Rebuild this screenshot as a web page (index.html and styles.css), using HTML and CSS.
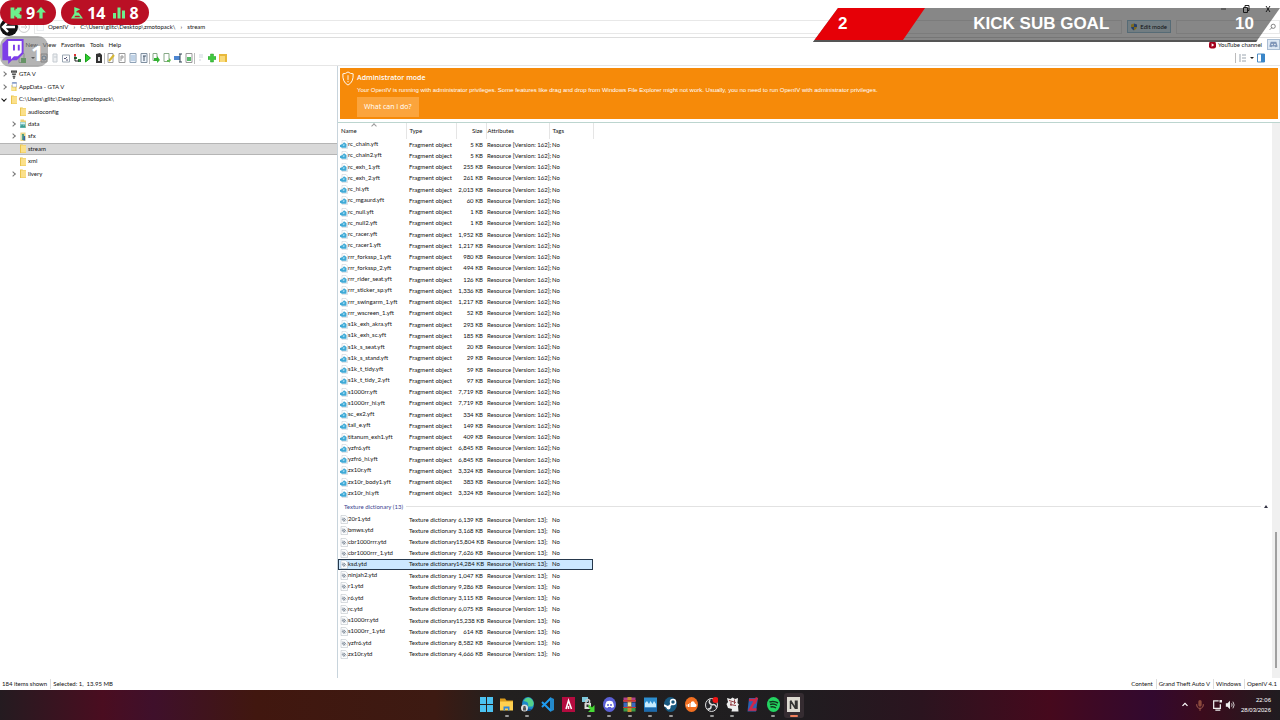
FILE: index.html
```html
<!DOCTYPE html>
<html lang="en">
<head>
    <meta charset="UTF-8">
    <meta name="viewport" content="width=device-width, initial-scale=1.0">
    <title>OpenIV</title>
    <link rel="stylesheet" href="styles.css">
</head>
<body>
    <svg class="symbols" aria-hidden="true">
        <symbol id="i-folder" viewBox="0 0 12 20" preserveAspectRatio="none"><path fill="#e9c34c" d="M0 1h5l1 1h6v18H0z"/><path fill="#fbe08a" d="M2 3h10v16H2z"/></symbol>
        <symbol id="i-folder-pic" viewBox="0 0 14 18" preserveAspectRatio="none"><path fill="#e9cf74" d="M1 1h8l1 2h4v15H1z"/><path fill="#7fc3c4" d="M0 6h13v12H0z"/><path fill="#d5f0ee" d="M1 7h11v3H1z"/><path fill="#3d9c8f" d="M1 15l4-4 3 3 3-2 2 5H1z"/></symbol>
        <symbol id="i-folder-sfx" viewBox="0 0 14 18" preserveAspectRatio="none"><path fill="#ecd68a" d="M1 1h12v17H1z"/><path fill="#2f8f7d" d="M5 4h4v12H5z"/><path fill="#3a62a8" d="M9 8h3v9H8z"/><path fill="#c8e4e0" d="M3 6h2v9H3z"/></symbol>
        <symbol id="i-app" viewBox="0 0 14 18" preserveAspectRatio="none"><path fill="#f0d25c" d="M1 6h12v12H1z"/><path fill="#fff" stroke="#8793ad" d="M3 1h10v9H3z"/><path fill="#4f73b8" d="M3 1h10v2H3z"/><path fill="#fbe79a" d="M1 11h9v6H1z"/></symbol>
        <symbol id="i-gta" viewBox="0 0 18 16" preserveAspectRatio="none"><path fill="#444" d="M0 1h18v4H0zM3 6h12v3H3zM5 10h8v3H5zM7 13h4v3H7z"/><path stroke="#999" d="M4 0v9M9 0v15M14 0v9"/></symbol>
        <symbol id="i-yft" viewBox="0 0 16 20" preserveAspectRatio="none"><path fill="#fff" stroke="#b9c2cc" d="M4 1h8l3 4v14H4z"/><path fill="#3fa9d6" d="M0 11l5-2 3-4 5 4v8H4l-4-2z"/><path fill="#9edcf3" d="M5 11l3-2 2 2-3 3z"/></symbol>
        <symbol id="i-ytd" viewBox="0 0 16 20" preserveAspectRatio="none"><path fill="#fbfcfd" stroke="#a9b2bc" d="M2 1h9l4 4v14H2z"/><path fill="none" stroke="#7a8796" stroke-width="2" d="M5 6l5 8M8 6l4 6M4 9l4 6"/></symbol>
        <symbol id="i-page" viewBox="0 0 16 20" preserveAspectRatio="none"><path fill="#f7fafc" stroke="#8f9caa" d="M2 1h9l4 4v14H2z"/></symbol>
    </svg>

    <header class="titlebar">
        <button class="back" aria-label="Back"><svg viewBox="0 0 18 18"><circle cx="9" cy="9" r="9" fill="#111"/><path d="M15 9H4M8 4L3 9l5 5" fill="none" stroke="#fff" stroke-width="2.4"/></svg></button>
        <button class="forward" aria-label="Forward"><svg viewBox="0 0 12 12"><circle cx="6" cy="6" r="5.4" fill="#fff" stroke="#ccc"/><path d="M3 6h6M7 4l2 2-2 2" fill="none" stroke="#ccc"/></svg></button>
        <nav class="path">
            <svg class="mini"><use href="#i-page"/></svg>
            <a href="#">OpenIV</a><i>›</i>
            <a href="#">C:\Users\glitc\Desktop\zmotopack\</a><i>›</i>
            <a href="#">stream</a>
        </nav>
        <button class="edit-mode">
            <svg viewBox="0 0 14 16"><path fill="#3c6fc4" d="M7 0l7 2v6H7z"/><path fill="#e8c531" d="M7 0L0 2v6h7zM7 8h7q-1 6-7 8z"/><path fill="#3c6fc4" d="M0 8h7v8Q1 14 0 8z"/></svg>
            Edit mode
        </button>
        <div class="search">
            <input type="text" aria-label="Search">
            <svg viewBox="0 0 10 10"><circle cx="6" cy="4" r="3" fill="none" stroke="#555"/><path d="M4 6L1 9" stroke="#555"/></svg>
        </div>
        <div class="window-buttons">
            <button aria-label="Minimize"><svg viewBox="0 0 8 8"><path d="M1 4h5" stroke="#555"/></svg></button>
            <button aria-label="Restore"><svg viewBox="0 0 8 8"><path d="M1.5 2.500h4v5h-4zM3 2.500v-2h4v5H5.500" fill="none" stroke="#222"/></svg></button>
            <button aria-label="Close"><svg viewBox="0 0 8 8"><path d="M2 1l4 6M6 1L2 7" stroke="#222"/></svg></button>
        </div>
    </header>

    <nav class="menubar">
        <button>File</button>
        <button>New</button>
        <button>View</button>
        <button>Favorites</button>
        <button>Tools</button>
        <button>Help</button>
        <a class="youtube" href="#"><svg viewBox="0 0 16 16"><rect width="16" height="16" rx="5" fill="#a4001c"/><path d="M6 4l6 4-6 4z" fill="#fff"/></svg>YouTube channel</a>
        <button class="discord" aria-label="Discord"><svg viewBox="0 0 12 10"><path fill="#7f96b8" d="M2 1h8l2 7-3 1-1-1H4L3 9 0 8z"/><circle cx="4" cy="5" r="1" fill="#fff"/><circle cx="8" cy="5" r="1" fill="#fff"/></svg></button>
    </nav>

    <div class="toolbar">
        <button aria-label="Open"><svg viewBox="0 0 8 10"><path fill="#fff" stroke="#8a8" d="M1 .5h5v9H1z"/><path fill="#3fae3f" d="M3 5h5v5H3z"/></svg></button>
        <button aria-label="More"><svg viewBox="0 0 8 10"><path d="M2 4h4L4 6z" fill="#222"/></svg></button>
        <button aria-label="Refresh"><svg viewBox="0 0 8 10"><path fill="#eee" stroke="#888" d="M1 1h6v8H1z"/><circle cx="4" cy="5" r="2" fill="none" stroke="#47739c"/></svg></button>
        <button aria-label="Undo"><svg viewBox="0 0 8 10"><path fill="#eef0f2" stroke="#c5cbd1" d="M2 1h4v8H2zM3 4h3"/></svg></button>
        <button aria-label="Select"><svg viewBox="0 0 8 10"><path fill="#fff" stroke="#9aa6b2" d="M.5 2h7v7h-7z"/><path d="M2 5l1 1 2-2M4 7h2" fill="none" stroke="#557"/></svg></button>
        <button aria-label="Tree"><svg viewBox="0 0 8 10"><path fill="#d33" d="M1 1h2v2H1z"/><path fill="#2b8a3a" d="M1 4h3v2H1zM5 6h3v3H5z"/><path d="M2 3v5h4" fill="none" stroke="#222"/></svg></button>
        <button aria-label="Run"><svg viewBox="0 0 8 10"><path fill="#2fd02f" stroke="#1b9c1b" d="M1.500 1l5 4-5 4z"/></svg></button>
        <button aria-label="Package"><svg viewBox="0 0 8 10"><path fill="#333" d="M1 1l4-1 2 2v8H1z"/><path fill="#ddd" d="M3 4h2v4H3z"/></svg></button>
        <span class="sep"></span>
        <button aria-label="Edit"><svg viewBox="0 0 8 10"><path fill="#fff" stroke="#999" d="M1 .5h5v9H1z"/><path d="M2 8l5-6" stroke="#d8b832" stroke-width="2"/></svg></button>
        <button aria-label="Properties"><svg viewBox="0 0 8 10"><path fill="#fff" stroke="#999" d="M1 .5h6v9H1z"/><path d="M3 8V3h2v2H3" fill="none" stroke="#999"/></svg></button>
        <button aria-label="View text"><svg viewBox="0 0 8 10"><path fill="#eef4fb" stroke="#8fa2b6" d="M1 .5h6v9H1z"/><path d="M2 3h4M2 5h4M2 7h4" stroke="#8fb0d2"/></svg></button>
        <button aria-label="View hex"><svg viewBox="0 0 8 10"><path fill="#eef4fb" stroke="#8090a0" d="M1 .5h6v9H1z"/><path d="M3 3h3M4 3v5" stroke="#456"/></svg></button>
        <span class="sep"></span>
        <button aria-label="Import"><svg viewBox="0 0 8 10"><path fill="#fff" stroke="#8a8" d="M1 .5h4v7H1z"/><path fill="#35b335" d="M2 5h3V3l3 4-3 3V8H2z"/></svg></button>
        <button aria-label="Export"><svg viewBox="0 0 8 10"><path fill="#fff" stroke="#8a8" d="M1 .5h5v8H1z"/><path fill="#62ba57" d="M4 7h2V5l2 2-2 3V9H4z"/></svg></button>
        <button aria-label="Rename"><svg viewBox="0 0 8 10"><path fill="#4d86d2" d="M0 3h6v4H0z"/><path d="M6 1v8M5 1h3M5 9h3" stroke="#345"/></svg></button>
        <button aria-label="Replace"><svg viewBox="0 0 8 10"><path fill="#fff" stroke="#999" d="M1 .5h6v9H1z"/><path fill="#59b86a" d="M2 4h4v4H2z"/></svg></button>
        <span class="sep"></span>
        <button aria-label="Copy"><svg viewBox="0 0 8 10"><path d="M2 2h4M2 4h4M2 7h2" stroke="#cfd6de"/></svg></button>
        <button aria-label="Add"><svg viewBox="0 0 8 10"><path fill="#3fc83f" stroke="#2a9a2a" stroke-width=".5" d="M2.500 1h3v2.500H8v3H5.500V9h-3V6.500H0v-3h2.500z"/></svg></button>
        <button aria-label="New folder"><svg viewBox="0 0 8 10"><path fill="#e8b93c" d="M0 1h8v8H0z"/><path fill="#f9da79" d="M1 3h5v6H1z"/></svg></button>
        <div class="view-switch">
            <button aria-label="List view"><svg viewBox="0 0 8 10"><path d="M1 1v8M3 2h4M3 5h4M3 8h4" stroke="#9aa4ae"/></svg></button>
            <button aria-label="View options"><svg viewBox="0 0 8 10"><path d="M2 4h4L4 6z" fill="#222"/></svg></button>
            <button aria-label="Preview pane"><svg viewBox="0 0 8 10"><path fill="#fff" stroke="#4d8cc4" d="M.5 1h7v8h-7z"/><path fill="#3a86c8" d="M4 1h4v8H4z"/></svg></button>
        </div>
    </div>

    <main>
        <ul class="tree">
            <li><i class="closed"></i><svg><use href="#i-gta"/></svg>GTA V</li>
            <li><i class="closed"></i><svg><use href="#i-app"/></svg>AppData - GTA V</li>
            <li><i class="open"></i><svg><use href="#i-folder"/></svg>C:\Users\glitc\Desktop\zmotopack\</li>
            <li class="child"><i></i><svg><use href="#i-folder"/></svg>audioconfig</li>
            <li class="child"><i class="closed"></i><svg><use href="#i-folder-pic"/></svg>data</li>
            <li class="child"><i class="closed"></i><svg><use href="#i-folder-sfx"/></svg>sfx</li>
            <li class="child selected"><i></i><svg><use href="#i-folder"/></svg>stream</li>
            <li class="child"><i></i><svg><use href="#i-folder"/></svg>xml</li>
            <li class="child"><i class="closed"></i><svg><use href="#i-folder"/></svg>livery</li>
        </ul>

        <section class="files">
            <div class="admin">
                <svg viewBox="0 0 24 32"><path d="M12 2q5 4 11 4 1 18-11 24Q0 24 1 6q6 0 11-4zM12 9v10M12 21v3" fill="none" stroke="#fff" stroke-width="2"/></svg>
                <div>
                    <h2>Administrator mode</h2>
                    <p>Your OpenIV is running with administrator privileges. Some features like drag and drop from Windows File Explorer might not work. Usually, you no need to run OpenIV with administrator privileges.</p>
                    <button>What can I do?</button>
                </div>
            </div>
            <div class="list">
                <div class="list-body">
                    <table class="fragments">
                        <thead>
                            <tr><th class="name sorted">Name</th><th class="type">Type</th><th class="size">Size</th><th class="attr">Attributes</th><th class="tags">Tags</th></tr>
                        </thead>
                        <tbody id="fragments"></tbody>
                    </table>
                    <div class="group"><h3>Texture dictionary (13)</h3><button aria-label="Collapse group"></button></div>
                    <table class="textures">
                        <tbody id="textures"></tbody>
                    </table>
                </div>
                <div class="scrollbar"><div class="thumb"></div></div>
            </div>
        </section>
    </main>

    <footer class="status">
        <span>184 items shown</span>
        <span>Selected: 1,&nbsp; 13.95 MB</span>
        <span class="right">Content</span>
        <span>Grand Theft Auto V</span>
        <span>Windows</span>
        <span>OpenIV 4.1</span>
    </footer>

    <div class="taskbar">
        <div class="apps">
            <button aria-label="Start"><svg viewBox="0 0 26 30"><path fill="#4cc2f1" d="M0 0h12v14H0zM14 0h12v14H14zM0 16h12v14H0zM14 16h12v14H14z"/></svg></button>
            <button class="on" aria-label="File Explorer"><svg viewBox="0 0 26 30"><path fill="#d99a1b" d="M0 3h10l3 4h13v10H0z"/><path fill="#ffd04f" d="M0 9h26v18H0z"/><path fill="#3488d8" d="M7 19h12v8h-3v-4h-6v4H7z"/></svg></button>
            <button class="on" aria-label="Edge"><svg viewBox="0 0 26 30"><ellipse cx="14" cy="14" rx="12" ry="14" fill="#1c88c9"/><path fill="#54d18a" d="M5 8Q13-4 22 5q6 8 1 14H14q3-10-9-11z"/><path fill="#104f94" d="M10 13q-2 12 13 11-9 7-17 1z"/><circle cx="7" cy="22" r="7" fill="#ddd"/><path fill="#555" d="M4 21h6v6H4zM5 18h4v3H5z"/></svg></button>
            <button aria-label="VS Code"><svg viewBox="0 0 26 30"><path fill="#2489ca" d="M18 0l8 4v22l-8 4z"/><path fill="none" stroke="#1f9cf0" stroke-width="4" d="M19 3L2 20M19 27L2 10"/></svg></button>
            <button aria-label="Alight"><svg viewBox="0 0 26 30"><path fill="#b40b3f" d="M0 0h26v30H0z"/><path d="M8 24l5-17 6 17M13 18v6" fill="none" stroke="#fff" stroke-width="3"/></svg></button>
            <button class="on" aria-label="WinSCP"><svg viewBox="0 0 26 30"><path fill="#7cc9de" d="M0 0h12v10H0z"/><path fill="#ddd" d="M5 12h13v12H5z"/><path d="M8 13V7q4-4 7 0v6" fill="none" stroke="#ccc" stroke-width="3"/><path fill="#48db35" d="M14 15l6 6 5-5v14H12l5-5-5-5z"/><path fill="#333" d="M9 15h4v5H9z"/></svg></button>
            <button class="on" aria-label="Discord"><svg viewBox="0 0 26 30"><ellipse cx="13" cy="15" rx="13" ry="15" fill="#5b60d6"/><path fill="#fff" d="M7 9q6-3 12 0 3 5 3 11l-5 2-1-2h-6l-1 2-5-2q0-6 3-11z"/><circle cx="10" cy="16" r="2" fill="#5b60d6"/><circle cx="16" cy="16" r="2" fill="#5b60d6"/></svg></button>
            <button class="on" aria-label="WinRAR"><svg viewBox="0 0 26 30"><path fill="#b33f86" d="M1 1h24v9H1z"/><path fill="#3b68bd" d="M1 11h24v9H1z"/><path fill="#3a9a45" d="M1 21h24v8H1z"/><path fill="#c98d31" d="M9 0h8v30H9z"/><path fill="#c53a2d" d="M0 6h26v3H0zM0 20h26v2H0z"/><path fill="#eee0a1" d="M10 11h6v7h-6z"/></svg></button>
            <button class="on" aria-label="Photos"><svg viewBox="0 0 26 30"><path fill="#2d8ed0" d="M0 1h26v28H0z"/><path fill="#c6ecff" d="M2 21V12l4-4 4 6 3-6 4 6 3-6 4 6v7z"/><path fill="#1c6aae" d="M0 21h26v8H0z"/></svg></button>
            <button class="on" aria-label="Steam"><svg viewBox="0 0 26 30"><ellipse cx="13" cy="15" rx="13" ry="15" fill="#17577e"/><path d="M0 16l9 5 8-10" fill="none" stroke="#fff" stroke-width="4"/><circle cx="18" cy="10" r="5" fill="#17577e" stroke="#fff" stroke-width="3"/><circle cx="9" cy="21" r="4" fill="#fff"/></svg></button>
            <button aria-label="SoundCloud"><svg viewBox="0 0 26 30"><ellipse cx="13" cy="15" rx="13" ry="15" fill="#f26f21"/><path fill="#fff" d="M12 20V10q6-4 8 3 4 1 3 5-1 2-3 2zM9 12h2v8H9zM6 14h2v6H6zM3 15h2v4H3z"/></svg></button>
            <button class="on" aria-label="OBS Studio"><svg viewBox="0 0 26 30"><ellipse cx="13" cy="16" rx="12" ry="13" fill="#26262b" stroke="#ddd" stroke-width="2"/><path d="M13 15Q6 12 10 5M13 16q8-3 10 5M12 17q1 8-7 7" fill="none" stroke="#ddd" stroke-width="3"/><circle cx="21" cy="6" r="6" fill="#f01414"/></svg></button>
            <button class="on" aria-label="Paint tool"><svg viewBox="0 0 26 30"><path fill="#eee" d="M2 2l7 2 4-3 5 3 6-2-1 10 3 3-2 3 1 11H11l1-5-8-2-3-8 3-4z"/><path d="M6 7l14 4M8 15l12 2M10 10v8M17 5v9" stroke="#933f45" stroke-width="2"/></svg></button>
            <button aria-label="Z editor"><svg viewBox="0 0 26 30"><path fill="#2c61b1" d="M6 2h18l-4 27H3z"/><path d="M6 6h13L8 25h13M22 1l-5 12" fill="none" stroke="#cf2747" stroke-width="5"/></svg></button>
            <button class="on" aria-label="Spotify"><svg viewBox="0 0 26 30"><ellipse cx="13" cy="15" rx="13" ry="15" fill="#23d461"/><path d="M5 10q9-3 17 2M6 15q8-3 14 2M7 20q6-2 11 2" fill="none" stroke="#12351d" stroke-width="3"/></svg></button>
            <button class="on active" aria-label="OpenIV"><svg viewBox="0 0 26 30"><path fill="#dedbd2" d="M0 0h26v30H0z"/><path d="M7 24V8M7 7l10 16M17 7v17M20 7v17" fill="none" stroke="#333" stroke-width="3"/></svg></button>
        </div>
        <div class="tray">
            <svg viewBox="0 0 12 14"><path d="M3 8l3-3 3 3" fill="none" stroke="#fff" stroke-width="1.500"/></svg>
            <svg viewBox="0 0 12 14"><rect x="4" y="1" width="4" height="8" rx="2" fill="#8c4a3c"/><path d="M2 6q0 5 4 5t4-5M6 11v3" fill="none" stroke="#b36b58"/></svg>
            <svg viewBox="0 0 12 14"><path d="M8 2H2v9h8V6M4 13h6" fill="none" stroke="#eee" stroke-width="1.500"/><path fill="#eee" d="M9 1h3v3H9z"/></svg>
            <svg viewBox="0 0 12 14"><path fill="#eee" d="M1 5h2l3-3v10L3 9H1z"/><path d="M8 5q1 2 0 4M9.500 3q3 4 0 8" fill="none" stroke="#eee"/></svg>
            <div class="clock">22:06<br>28/03/2026</div>
        </div>
    </div>

    <!-- stream overlays -->
    <div class="pills">
        <div class="pill">
            <svg viewBox="0 0 22 22"><path fill="#6df08c" d="M1 1h7v5h2V3h3V1h8v7h-3v3h-2v1h2v2h3v7h-8v-2h-3v-3H8v5H1z"/></svg>
            <b>9</b>
            <svg class="arrow" viewBox="0 0 18 22"><path fill="#6df08c" d="M9 0l9 10h-6v11H6V10H0z"/></svg>
        </div>
        <div class="pill">
            <svg viewBox="0 0 22 22"><path fill="#6df08c" d="M6 0l11 4-7 4v2h4l8 11H0l6-9z"/><path fill="#ba1025" d="M8 16h7l2 3H6z"/></svg>
            <b>14</b>
            <svg class="bars" viewBox="0 0 24 22"><path fill="#6df08c" d="M0 11h6v11H0zM9 0h6v22H9zM18 6h6v16h-6z"/></svg>
            <b>8</b>
        </div>
    </div>
    <div class="twitch">
        <svg viewBox="0 0 22 26"><path fill="#7d3ee8" d="M5 0h17v15l-7 7h-5l-4 4v-4H0V5z"/><path fill="#fff" d="M6 2h14v12l-4 4h-4l-3 3v-3H6z"/><path fill="#7d3ee8" d="M11 6h2v6h-2zM16 6h2v6h-2z"/></svg>
        <b>1</b>
    </div>
    <div class="goal">
        <div class="goal-shape"><div class="goal-fill"></div></div>
        <div class="goal-text"><b>2</b><b>KICK SUB GOAL</b><b>10</b></div>
    </div>

    <script>
        const fragments = [
            ['rc_chain.yft', '5'], ['rc_chain2.yft', '5'], ['rc_exh_1.yft', '255'], ['rc_exh_2.yft', '261'],
            ['rc_hi.yft', '2,013'], ['rc_mgaurd.yft', '60'], ['rc_null.yft', '1'], ['rc_null2.yft', '1'],
            ['rc_racer.yft', '1,952'], ['rc_racer1.yft', '1,217'], ['rrr_forkssp_1.yft', '980'], ['rrr_forkssp_2.yft', '494'],
            ['rrr_rider_seat.yft', '126'], ['rrr_sticker_sp.yft', '1,336'], ['rrr_swingarm_1.yft', '1,217'], ['rrr_wscreen_1.yft', '52'],
            ['s1k_exh_akra.yft', '293'], ['s1k_exh_sc.yft', '185'], ['s1k_s_seat.yft', '20'], ['s1k_s_stand.yft', '29'],
            ['s1k_t_tidy.yft', '59'], ['s1k_t_tidy_2.yft', '97'], ['s1000rr.yft', '7,719'], ['s1000rr_hi.yft', '7,719'],
            ['sc_ex2.yft', '334'], ['tail_e.yft', '149'], ['titanum_exh1.yft', '409'], ['yzfr6.yft', '6,845'],
            ['yzfr6_hi.yft', '6,845'], ['zx10r.yft', '3,324'], ['zx10r_body1.yft', '383'], ['zx10r_hi.yft', '3,324']
        ];
        const textures = [
            ['20r1.ytd', '6,139'], ['bmws.ytd', '3,168'], ['cbr1000rrr.ytd', '15,804'], ['cbr1000rrr_1.ytd', '7,626'],
            ['ksd.ytd', '14,284'], ['ninjah2.ytd', '1,047'], ['r1.ytd', '9,286'], ['r6.ytd', '3,115'], ['rc.ytd', '6,075'],
            ['s1000rr.ytd', '15,238'], ['s1000rr_1.ytd', '614'], ['yzfr6.ytd', '8,582'], ['zx10r.ytd', '4,666']
        ];

        function fill(id, files, icon, type, version) {
            document.getElementById(id).innerHTML = files.map(([name, size]) => `
                <tr class="${name === 'ksd.ytd' ? 'selected' : ''}">
                    <td class="name"><svg><use href="#${icon}"/></svg>${name}</td>
                    <td class="type">${type}</td>
                    <td class="size">${size} KB</td>
                    <td class="attr">Resource [Version: ${version}];</td>
                    <td class="tags">No</td>
                </tr>`).join('');
        }

        fill('fragments', fragments, 'i-yft', 'Fragment object', 162);
        fill('textures', textures, 'i-ytd', 'Texture dictionary', 13);
    </script>
</body>
</html>
```
FILE: styles.css
```css
* {
    box-sizing: border-box;
}

body {
    margin: 0;
    min-height: 100vh;
    display: flex;
    flex-direction: column;
    background-color: #fff;
    color: #111;
    font-family: Lato, "Liberation Sans", sans-serif;
    font-size: 6px;
    font-variant-ligatures: none;
    line-height: 10px;
}

button, input {
    font: inherit;
    color: inherit;
    background: none;
    border: none;
    padding: 0;
    margin: 0;
}

a {
    color: inherit;
    text-decoration: none;
}

svg {
    display: block;
    flex: none;
}

.symbols {
    position: absolute;
    width: 0;
    height: 0;
}

/* title bar */
.titlebar {
    position: relative;
    display: flex;
    align-items: center;
    height: 38px;
    padding-top: 16px;
    border-bottom: 1px solid #ddd;
}

.back svg {
    width: 18px;
    height: 20px;
}

.forward svg {
    width: 12px;
    height: 14px;
}

.path {
    flex: 1;
    display: flex;
    align-items: center;
    height: 14px;
    margin-left: 4px;
    border: 1px solid #e8e8e8;
}

.path .mini {
    width: 8px;
    height: 9px;
    margin: 0 4px 0 1px;
    opacity: 0.4;
}

.path i {
    width: 12px;
    font-style: normal;
    text-align: center;
}

.edit-mode {
    display: flex;
    align-items: center;
    gap: 3px;
    height: 13px;
    padding: 0 3px;
    margin: 0 5px;
    border: 1px solid #9cc6dc;
    background-color: #d5eaf4;
}

.edit-mode svg {
    width: 6px;
    height: 8px;
}

.search {
    display: flex;
    align-items: center;
    width: 104px;
    height: 14px;
    border: 1px solid #e8e8e8;
}

.search input {
    flex: 1;
    min-width: 0;
}

.search svg {
    width: 7px;
    height: 8px;
    margin-right: 3px;
}

.window-buttons {
    position: absolute;
    top: 5px;
    right: 8px;
    display: flex;
    gap: 14px;
}

.window-buttons svg {
    width: 8px;
    height: 8px;
}

/* menu */
.menubar {
    display: flex;
    align-items: center;
    gap: 5px;
    height: 13px;
    padding-left: 11px;
}

.youtube {
    display: flex;
    align-items: center;
    gap: 2px;
    margin-left: auto;
}

.youtube svg {
    width: 7px;
    height: 8px;
}

.discord {
    display: flex;
    align-items: center;
    justify-content: center;
    width: 13px;
    height: 11px;
    border: 1px solid #a9bdd3;
    background-color: #dce7f3;
}

.discord svg {
    width: 9px;
    height: 7px;
}

.toolbar {
    display: flex;
    align-items: center;
    height: 15px;
    padding: 0 15px 0 16px;
    border-bottom: 1px solid #e6e6e6;
}

.toolbar button {
    display: flex;
    justify-content: center;
    width: 11px;
}

.toolbar svg {
    width: 8px;
    height: 10px;
}

.sep {
    width: 1px;
    height: 11px;
    background-color: #bbb;
}

.view-switch {
    display: flex;
    margin-left: auto;
    padding-left: 2px;
    border-left: 1px solid #bbb;
}

.view-switch button {
    width: 9px;
}

/* panes */
main {
    flex: 1;
    display: flex;
}

.tree {
    display: grid;
    grid-template-rows: repeat(9, 1fr);
    align-self: flex-start;
    width: 337px;
    height: 112px;
    margin: 2px 0 0;
    padding: 0;
    list-style: none;
}

.tree li {
    display: flex;
    align-items: center;
    padding-left: 2px;
}

.tree li.child {
    padding-left: 11px;
}

.tree li.selected {
    background-color: #d9d9d9;
    border-top: 1px solid #b5b5b5;
    border-bottom: 1px solid #b5b5b5;
}

.tree i {
    display: flex;
    width: 6px;
    margin-right: 3px;
}

.tree i.closed::before, .tree i.open::before {
    content: "";
    width: 3px;
    height: 3px;
    border: solid #777;
    border-width: 1px 1px 0 0;
    transform: rotate(45deg);
}

.tree i.open::before {
    border-color: #111;
    transform: rotate(135deg);
}

.tree svg {
    width: 6px;
    height: 9px;
    margin-right: 2px;
}

.files {
    flex: 1;
    display: flex;
    flex-direction: column;
    min-width: 0;
    border-left: 1px solid #c8d4dc;
}

.admin {
    display: flex;
    gap: 3px;
    margin: 2px 2px 3px;
    padding: 3px 2px 2px;
    background-color: #f68a09;
    color: #fff;
}

.admin > svg {
    width: 12px;
    height: 15px;
}

.admin h2 {
    margin: 0;
    font-family: "Open Sans", sans-serif;
    font-size: 7px;
    font-weight: 600;
    line-height: 14px;
}

.admin p {
    margin: 0 0 2px;
    font-family: "Liberation Sans", sans-serif;
    line-height: 10px;
}

.admin button {
    display: block;
    height: 20px;
    padding: 0 7px;
    background-color: #fba43c;
    font-family: "Open Sans", sans-serif;
    font-size: 7px;
}

.list {
    flex: 1;
    display: flex;
    border-top: 1px solid #bcd5cf;
}

.list-body {
    flex: 1;
    min-width: 0;
}

table {
    width: 255px;
    table-layout: fixed;
    border-collapse: collapse;
    line-height: 8px;
}

/* row pitch comes from sharing the table height out */
.fragments {
    height: 376px;
}

.textures {
    height: 146px;
}

th, td {
    padding: 0 3px;
    text-align: left;
    font-weight: normal;
    white-space: nowrap;
}

th {
    height: 16px;
    border-right: 1px solid #e5e5e5;
}

.name {
    width: 68px;
}

.type {
    width: 50px;
}

.size {
    width: 30px;
    padding-left: 0;
    text-align: right;
}

.attr {
    width: 63px;
    padding: 0 0 0 1px;
}

.tags {
    width: 44px;
}

/* sort mark over the header text */
.sorted {
    position: relative;
}

.sorted::after {
    content: "";
    position: absolute;
    top: 1px;
    left: 34px;
    width: 3px;
    height: 3px;
    border: solid #999;
    border-width: 1px 0 0 1px;
    transform: rotate(45deg);
}

td.name {
    padding-left: 2px;
}

td svg {
    float: left;
    width: 8px;
    height: 9px;
}

tr.selected {
    background-color: #cce8ff;
    outline: 1px solid #26384c;
    outline-offset: -1px;
}

.group {
    display: flex;
    align-items: center;
    gap: 3px;
    height: 15px;
    padding: 0 4px 0 6px;
    color: #3a3f8f;
}

.group h3 {
    margin: 0;
    font-size: 6px;
    font-weight: normal;
}

.group::after {
    content: "";
    order: 1;
    flex: 1;
    height: 1px;
    background-color: #e2e2e2;
}

.group button {
    order: 2;
    border: solid transparent;
    border-width: 0 2px 3px;
    border-bottom-color: #334;
}

.scrollbar {
    display: flex;
    align-items: flex-end;
    width: 8px;
    padding: 0 3px 10px;
    background-color: #f0f0f0;
}

.thumb {
    width: 2px;
    height: 25%;
    background-color: #a0a0a0;
}

.status {
    display: flex;
    align-items: center;
    height: 12px;
}

.status span {
    padding: 0 3px 0 2px;
    border-right: 1px solid #ddd;
}

.status span:nth-child(2), .status span:last-child {
    border-right: none;
}

.status .right {
    margin-left: auto;
}

/* taskbar */
.taskbar {
    display: grid;
    grid-template-columns: 1fr 328px 1fr;
    align-items: center;
    height: 30px;
    background: linear-gradient(90deg, #241b20, #4a0d20 8%, #3f102b 12%, #41170f 20%, #3d1a12 34%, #22201f 39%, #1f1d20 62%, #2b141f 72%, #46091d 82%, #32092f 90%, #3b0b1c 94%, #201c20);
    color: #fff;
}

.apps {
    grid-column: 2;
    display: grid;
    grid-template-columns: repeat(16, 1fr);
}

.apps button {
    position: relative;
    display: flex;
    justify-content: center;
    padding: 4px 0 6px;
}

.apps svg {
    width: 13px;
    height: 15px;
}

.apps .on::after {
    content: "";
    position: absolute;
    bottom: 1px;
    width: 4px;
    height: 2px;
    border-radius: 1px;
    background-color: #999;
}

.apps .active {
    border-radius: 3px;
    background-color: #352c31;
}

.apps .active::after {
    width: 8px;
    background-color: #f0805c;
}

.tray {
    display: flex;
    align-items: center;
    justify-content: flex-end;
    gap: 3px;
    padding-right: 9px;
}

.tray svg {
    width: 10px;
    height: 12px;
}

.tray svg:nth-child(2) {
    margin: 0 4px 0 2px;
}

.clock {
    margin-left: 3px;
    font-family: "Liberation Sans", sans-serif;
    font-size: 6px;
    text-align: right;
}

/* stream overlays */
.pills {
    position: absolute;
    top: 0;
    left: 0;
    display: flex;
    gap: 5px;
}

.pill {
    display: flex;
    align-items: center;
    gap: 4px;
    height: 25px;
    padding: 0 10px;
    border-radius: 13px;
    background-color: #ba1025;
    color: #fff;
    font-family: "Noto Sans", sans-serif;
    font-size: 16px;
    line-height: 24px;
}

.pill svg {
    width: 12px;
    height: 12px;
}

.pill .arrow {
    width: 10px;
    margin-left: -3px;
}

.pill .bars {
    margin-left: 4px;
}

.twitch {
    position: absolute;
    top: 36px;
    left: 0;
    display: flex;
    align-items: center;
    gap: 7px;
    width: 48px;
    height: 31px;
    padding-left: 2px;
    border-radius: 10px;
    background-color: rgba(130, 130, 130, 0.6);
    color: #fff;
    font-family: "Noto Sans", sans-serif;
    font-size: 22px;
    line-height: 28px;
}

.twitch svg {
    width: 22px;
    height: 25px;
}

.goal {
    position: absolute;
    top: 8px;
    right: 0;
    width: 467px;
    height: 34px;
    color: #fff;
}

.goal-shape {
    height: 34px;
    background-color: rgba(16, 16, 16, 0.5);
    border-bottom: 2px solid #555;
    clip-path: polygon(25px 0, 100% 0, 443px 100%, 0 100%);
}

.goal-fill {
    width: 112px;
    height: 32px;
    background-color: #e60007;
    clip-path: polygon(0 0, 100% 0, 90px 100%, 0 100%);
}

.goal-text {
    position: absolute;
    inset: 0 26px 2px 25px;
    display: flex;
    align-items: center;
    justify-content: space-between;
    font-family: "Liberation Sans", sans-serif;
    font-size: 17px;
    line-height: 30px;
}
```
